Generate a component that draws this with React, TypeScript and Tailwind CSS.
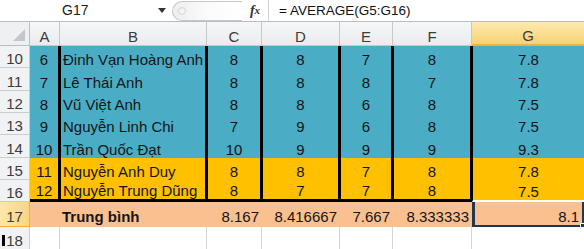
import React from 'react';

type Row = {
  n: string;
  h: string;
  tone: string;
  vals: string[];
  last?: boolean;
};

const rows: Row[] = [
  { n: '10', h: 'h-[22px]', tone: 'bg-[#4bacc6]', vals: ['6', 'Đinh Vạn Hoàng Anh', '8', '8', '7', '8', '7.8'] },
  { n: '11', h: 'h-[23px]', tone: 'bg-[#4bacc6]', vals: ['7', 'Lê Thái Anh', '8', '8', '8', '7', '7.8'] },
  { n: '12', h: 'h-[22px]', tone: 'bg-[#4bacc6]', vals: ['8', 'Vũ Việt Anh', '8', '8', '6', '8', '7.5'] },
  { n: '13', h: 'h-[22px]', tone: 'bg-[#4bacc6]', vals: ['9', 'Nguyễn Linh Chi', '7', '9', '6', '8', '7.5'] },
  { n: '14', h: 'h-[23px]', tone: 'bg-[#4bacc6]', vals: ['10', 'Trần Quốc Đạt', '10', '9', '9', '9', '9.3'] },
  { n: '15', h: 'h-[22px]', tone: 'bg-[#ffc000]', vals: ['11', 'Nguyễn Anh Duy', '8', '8', '7', '8', '7.8'] },
  { n: '16', h: 'h-[22px]', tone: 'bg-[#ffc000]', vals: ['12', 'Nguyễn Trung Dũng', '8', '7', '7', '8', '7.5'], last: true },
];

const cols = 'grid grid-cols-[30px_30px_147px_55px_78px_53px_79px_112px]';

// thick black dividers between A..G, centred on the column line
const edge = [
  'border-r-2 border-black',
  'border-l border-r-2 border-black',
  'border-l border-r-2 border-black',
  'border-l border-r-2 border-black',
  'border-l border-r-2 border-black',
  'border-l border-r-2 border-black',
  'border-l border-black',
];
const edgeLast = [
  'border-r-2 border-b-[3px] border-black',
  'border-l border-r-2 border-b-[3px] border-black',
  'border-l border-r-2 border-b-[3px] border-black',
  'border-l border-r-2 border-b-[3px] border-black',
  'border-l border-r-2 border-b-[3px] border-black',
  'border-l border-r-2 border-b-[3px] border-black',
  'border-l border-l-black border-b-2 border-b-white',
];

function RowHead({ n, className = '' }: { n: string; className?: string }) {
  return (
    <div className={`flex items-end justify-center border-r border-b border-[#c9cdd2] text-[15px] leading-[17px] text-[#3c3c3c] ${className}`}>
      {n}
    </div>
  );
}

export default function App() {
  return (
    <div className="w-[584px] h-[249px] overflow-hidden bg-white font-['Liberation_Sans',Arial,sans-serif] text-[#151515]">
      {/* formula bar */}
      <div className="flex h-[22px] items-center border-b border-[#b9bec4] text-[13.5px]">
        <div className="flex w-[172px] items-center pl-[62px] pr-[6px]">
          <span className="text-[14px] text-[#202020]">G17</span>
          <svg className="ml-auto" width="8" height="5" viewBox="0 0 8 5">
            <path d="M0 0h8L4 5z" fill="#333" />
          </svg>
        </div>
        <div className="flex h-[20px] w-[70px] items-center rounded-l-full border border-r-0 border-[#c7c7c7] bg-gradient-to-r from-[#eeeeee] via-[#fbfbfb] to-white pl-[5px]">
          <div className="h-[8px] w-[8px] rounded-full border border-[#d5d5d5] bg-[#f3f3f3]" />
        </div>
        <div className="flex w-[26px] items-center justify-center font-['Liberation_Serif',serif] text-[14px] font-bold italic text-[#333]">
          f<span className="text-[11px]">x</span>
        </div>
        <div className="flex h-full flex-1 items-center border-l border-[#cfd3d8] pl-[10px] pt-[1px] text-[#111]">
          = AVERAGE(G5:G16)
        </div>
      </div>

      {/* column headers */}
      <div className={`${cols} h-[24px] text-[15px] leading-[17px] text-[#3c3c3c]`}>
        <div className="relative border-r border-b border-[#b9bec4] bg-[#eef0f2]">
          <div className="absolute right-[4px] bottom-[4px] h-0 w-0 border-l-[12px] border-t-[12px] border-l-transparent border-t-transparent border-r-0 border-b-[12px] border-b-[#c3c6ca]" />
        </div>
        {['A', 'B', 'C', 'D', 'E', 'F'].map((c) => (
          <div key={c} className="flex items-end justify-center border-r border-b border-[#c5c9ce] bg-gradient-to-b from-[#f6f7f8] to-[#e9ebee]">
            {c}
          </div>
        ))}
        <div className="flex items-end justify-center border-b-2 border-[#efb23a] bg-gradient-to-b from-[#fdeab0] to-[#f8d270]">
          G
        </div>
      </div>

      {/* data rows */}
      {rows.map((r) => {
        const e = r.last ? edgeLast : edge;
        return (
          <div key={r.n} className={`${cols} ${r.h} text-[15px] leading-[17px]`}>
            <RowHead n={r.n} className="bg-[#f0f2f4]" />
            {r.vals.map((v, i) => (
              <div
                key={i}
                className={`flex items-end ${r.tone} ${e[i]} ${i === 1 ? 'justify-start pl-[2px] whitespace-nowrap' : 'justify-center'}`}
              >
                {v}
              </div>
            ))}
          </div>
        );
      })}

      {/* average row */}
      <div className={`${cols} h-[25px] text-[15px] leading-[17px]`}>
        <div className="flex items-end justify-center border-r border-b border-[#efb23a] bg-gradient-to-r from-[#fde7a8] to-[#f9d67c] pb-[1px] text-[#3c3c3c]">
          17
        </div>
        <div className="bg-[#fac090]" />
        <div className="flex items-end bg-[#fac090] pb-[2px] pl-[2px] font-bold">Trung bình</div>
        <div className="flex items-end justify-end bg-[#fac090] pb-[2px] pr-[3px]">8.167</div>
        <div className="flex items-end justify-end bg-[#fac090] pb-[2px] pr-[3px]">8.416667</div>
        <div className="flex items-end justify-end bg-[#fac090] pb-[2px] pr-[3px]">7.667</div>
        <div className="flex items-end justify-end bg-[#fac090] pb-[2px] pr-[3px]">8.333333</div>
        <div className="relative flex items-end justify-end border-l-[3px] border-r-2 border-b-2 border-[#1f3850] bg-[#fac090] pr-[3px]">
          8.1
          <div className="absolute -right-[3px] -bottom-[3px] h-[5px] w-[5px] border border-white bg-[#1f3850]" />
        </div>
      </div>

      {/* empty row */}
      <div className={`${cols} h-[22px] text-[15px] leading-[17px]`}>
        <div className="relative flex items-end justify-center border-r border-[#c9cdd2] bg-[#f0f2f4] text-[#3c3c3c]">
          <div className="absolute left-[2px] top-[8px] h-[11px] w-[3px] bg-black" />
          18
        </div>
        <div className="border-r border-[#d4d4d4]" />
        <div className="border-r border-[#d4d4d4]" />
        <div className="border-r border-[#d4d4d4]" />
        <div className="border-r border-[#d4d4d4]" />
        <div className="border-r border-[#d4d4d4]" />
        <div className="border-r border-[#d4d4d4]" />
        <div />
      </div>
    </div>
  );
}
